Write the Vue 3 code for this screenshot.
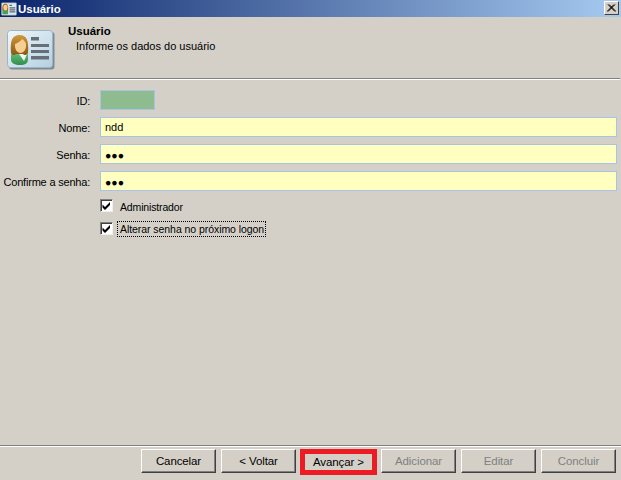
<script setup>
const fields = [
  { label: 'Nome:', value: 'ndd', secret: false },
  { label: 'Senha:', value: '●●●', secret: true },
  { label: 'Confirme a senha:', value: '●●●', secret: true },
]
const buttons = [
  { text: 'Cancelar' },
  { text: '< Voltar' },
  { text: 'Avançar >', marked: true },
  { text: 'Adicionar', off: true },
  { text: 'Editar', off: true },
  { text: 'Concluir', off: true },
]
</script>

<template>
  <div class="win">
    <div class="titlebar">
      <svg class="ticon" width="16" height="14" viewBox="0 0 47 39">
        <rect x="1" y="1" width="45" height="37" rx="3" fill="#dbe9f3" stroke="#6f8596" stroke-width="2"/>
        <path d="M4 25h17v6c0 3-2 4-4 4H8c-2 0-4-1-4-4z" fill="#3fa45a"/>
        <path d="M4 24C3 12 5 4 12.500 4S22 12 21 24c-2 2-4 2-5 1H9c-1 1-3 1-5-1z" fill="#a86c1c"/>
        <ellipse cx="13" cy="15" rx="6" ry="8" fill="#f7cf91"/>
        <path d="M25 9h7M25 16h17M25 22h17M25 28h17" stroke="#5d6670" stroke-width="3.500"/>
      </svg>
      <span class="ttext">Usuário</span>
      <button class="close" aria-label="Fechar">
        <svg width="9" height="8" viewBox="0 0 9 8"><path d="M1 0.5L8 7.500M8 0.5L1 7.500M2 0.5L9 7.500M7 0.5L0 7.500" stroke="#000" stroke-width="1" fill="none"/></svg>
      </button>
    </div>

    <div class="header">
      <svg class="hicon" width="48" height="40" viewBox="0 0 48 40">
        <defs>
          <linearGradient id="card" x1="0" y1="0" x2="1" y2="1">
            <stop offset="0" stop-color="#f0f7fb"/><stop offset="1" stop-color="#b4d0e2"/>
          </linearGradient>
          <linearGradient id="hair" x1="0" y1="0" x2="0" y2="1">
            <stop offset="0" stop-color="#d09a3c"/><stop offset="1" stop-color="#8a5716"/>
          </linearGradient>
          <linearGradient id="shirt" x1="0" y1="0" x2="0" y2="1">
            <stop offset="0" stop-color="#62b976"/><stop offset="1" stop-color="#2f8f4a"/>
          </linearGradient>
        </defs>
        <rect x="2" y="2" width="45.500" height="37.500" rx="3" fill="#7d8a96"/>
        <rect x="0.5" y="0.5" width="45" height="37" rx="3" fill="url(#card)" stroke="#9db4c6"/>
        <path d="M4 24h17v6c0 3-3 5-8 5s-9-2-9-5z" fill="url(#shirt)"/>
        <path d="M12 24l8 0-3 7z" fill="#f2f7f2"/>
        <path d="M4 23C3 11 5 5 12.500 5S22 11 21 23c-1.500 2.500-4 2.500-5 1H9c-1 1.500-3.500 1.500-5-1z" fill="url(#hair)"/>
        <path d="M8 14c2-1 5-2 7-5 2 1 3.500 3 4 5 .5 5-2 9-5.500 9S7.500 19 8 14z" fill="#f7cf91"/>
        <path d="M24 7h8v3.500h-8zM24 14h18v3H24zM24 20h18v3H24zM24 26h18v3.500H24z" fill="#666e78"/>
      </svg>
      <div class="htext">
        <div class="htitle">Usuário</div>
        <div class="hsub">Informe os dados do usuário</div>
      </div>
    </div>
    <div class="rule"></div>

    <div class="form">
      <div class="row">
        <label class="lbl">ID:</label>
        <div class="input idbox"></div>
      </div>
      <div class="row" v-for="f in fields" :key="f.label">
        <label class="lbl">{{ f.label }}</label>
        <div class="input" :class="{ secret: f.secret }">{{ f.value }}</div>
      </div>
      <div class="checks">
        <div class="check">
          <span class="box"><svg width="9" height="9" viewBox="0 0 9 9"><path d="M0.5 3.500l2.500 2.500L8 1v3L3 9 0.5 6.500z" fill="#000"/></svg></span>
          <span class="ctext admin">Administrador</span>
        </div>
        <div class="check">
          <span class="box"><svg width="9" height="9" viewBox="0 0 9 9"><path d="M0.5 3.500l2.500 2.500L8 1v3L3 9 0.5 6.500z" fill="#000"/></svg></span>
          <span class="ctext focus">Alterar senha no próximo logon</span>
        </div>
      </div>
    </div>

    <div class="rule foot"></div>
    <div class="actions">
      <div v-for="b in buttons" :key="b.text" class="slot" :class="{ marked: b.marked }">
        <button class="btn" :class="{ off: b.off }">{{ b.text }}</button>
      </div>
    </div>
  </div>
</template>

<style>
html, body { margin: 0; overflow: hidden; }
</style>

<style scoped>
.win {
  width: 621px;
  height: 480px;
  background: #d4d0c8;
  display: flex;
  flex-direction: column;
  font-family: "Liberation Sans", Arial, sans-serif;
  font-size: 11px;
  color: #000;
  overflow: hidden;
}
.titlebar {
  height: 17px;
  display: flex;
  align-items: center;
  padding: 0 2px 0 1px;
  background: linear-gradient(90deg, #0a246a, #a6caf0);
  color: #fff;
  font-weight: bold;
  font-size: 11.500px;
}
.ticon { flex: none; }
.ttext { margin-left: 1px; flex: 1; }
.close {
  width: 15px;
  height: 14px;
  padding: 0;
  margin-top: -1px;
  background: #d4d0c8;
  border: 1px solid;
  border-color: #fff #404040 #404040 #fff;
  display: flex;
  align-items: center;
  justify-content: center;
}
.header {
  height: 61px;
  display: flex;
  box-sizing: border-box;
  padding: 13px 0 0 7px;
}
.hicon { flex: none; }
.htext { margin-left: 13px; margin-top: -6px; }
.htitle { font-weight: bold; font-size: 11.500px; line-height: 14px; }
.hsub { margin-left: 8px; line-height: 14px; margin-top: 1px; }
.rule {
  height: 1px;
  margin-right: 1px;
  background: #808080;
  border-bottom: 1px solid #fff;
}
.form {
  flex: 1;
  padding-top: 10px;
}
.row {
  display: flex;
  align-items: center;
  height: 20px;
  margin-bottom: 7px;
  padding-right: 4px;
}
.lbl {
  width: 90px;
  text-align: right;
  margin-right: 10px;
  flex: none;
  white-space: nowrap;
  font-size: 11px;
  letter-spacing: -0.200px;
  padding-top: 2px;
}
.input {
  flex: 1;
  height: 20px;
  box-sizing: border-box;
  background: #ffffc0;
  border: 1px solid #a6c5e6;
  padding-left: 4px;
  line-height: 19px;
  font-size: 11px;
}
.idbox {
  flex: none;
  width: 55px;
  background: #8fbc8f;
}
.secret {
  font-size: 10.500px;
  line-height: 20px;
}
.checks {
  padding-left: 100px;
  display: flex;
  flex-direction: column;
  gap: 9px;
  margin-top: 1px;
}
.check {
  display: flex;
  align-items: center;
  height: 14px;
}
.box {
  width: 13px;
  height: 13px;
  box-sizing: border-box;
  background: #fff;
  border: 1px solid;
  border-color: #808080 #f0f0f0 #f0f0f0 #808080;
  box-shadow: inset 1px 1px 0 #404040;
  display: flex;
  align-items: center;
  justify-content: center;
  flex: none;
}
.ctext {
  margin-left: 5px;
  padding: 0 1px;
  border: 1px solid transparent;
  white-space: nowrap;
  line-height: 14px;
  font-size: 10.500px;
  letter-spacing: -0.150px;
}
.admin { margin-top: 3px; }
.ctext.focus {
  margin-left: 4px;
  margin-top: 2px;
  padding: 0 1px 0 2px;
  border: 1px dotted #000;
  letter-spacing: -0.060px;
}
.foot { margin-right: 0; }
.actions {
  height: 33px;
  box-sizing: border-box;
  padding: 2px 5px 0 141px;
  display: flex;
  gap: 5px;
}
.slot {
  width: 75px;
  height: 24px;
  flex: none;
}
.marked {
  width: 77px;
  margin: 0 -1px;
  border: 5px solid #ed1c24;
  box-sizing: border-box;
  height: 26px;
}
.btn {
  display: block;
  width: 100%;
  height: 100%;
  padding: 0;
  font: inherit;
  font-size: 11.500px;
  letter-spacing: -0.100px;
  background: #d4d0c8;
  color: #000;
  border: 1px solid;
  border-color: #fff #404040 #404040 #fff;
  box-shadow: inset -1px -1px 0 #808080;
}
.marked .btn {
  border: 0;
  box-shadow: none;
}
.btn.off { color: #808080; }
</style>
